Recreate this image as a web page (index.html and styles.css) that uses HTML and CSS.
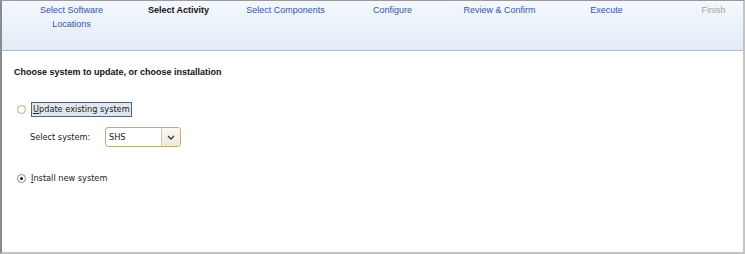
FILE: index.html
```html
<!DOCTYPE html>
<html lang="en">
<head>
    <meta charset="UTF-8">
    <title>Install Wizard</title>
    <link rel="stylesheet" href="styles.css">
</head>
<body>
    <div class="frame">
        <div class="steps">
            <div class="step">Select Software<br>Locations</div>
            <div class="step current">Select Activity</div>
            <div class="step">Select Components</div>
            <div class="step">Configure</div>
            <div class="step">Review &amp; Confirm</div>
            <div class="step">Execute</div>
            <div class="step disabled">Finish</div>
        </div>

        <div class="content">
            <h2 class="title">Choose system to update, or choose installation</h2>

            <label class="option first">
                <span class="radio"></span>
                <span class="focus"><u>U</u>pdate existing system</span>
            </label>

            <div class="select-row">
                <span class="select-label">Select system:</span>
                <div class="combo">
                    <span class="combo-value">SHS</span>
                    <span class="combo-btn">
                        <svg width="8" height="5" viewBox="0 0 8 5"><path d="M1 1 L4 4 L7 1" fill="none" stroke="#333" stroke-width="1.3"/></svg>
                    </span>
                </div>
            </div>

            <label class="option second">
                <span class="radio checked"></span>
                <span class="text"><u>I</u>nstall new system</span>
            </label>
        </div>
    </div>
</body>
</html>
```

FILE: styles.css
```css
body {
    margin: 0;
    background: #fff;
    font-family: 'Liberation Sans', Arial, sans-serif;
}
.frame {
    width: 745px;
    height: 254px;
    box-sizing: border-box;
    border-left: 2px solid #8a8a8a;
    border-right: 2px solid #c4c4c4;
    border-bottom: 2px solid #c4c4c4;
    border-top: 1px solid #9a9a9a;
    overflow: hidden;
}
.steps {
    display: flex;
    height: 49px;
    padding-left: 16px;
    background: linear-gradient(#f4f8fe, #e3ebf5);
    border-bottom: 1px solid #a9bdd5;
}
.step {
    flex: 0 0 107px;
    text-align: center;
    font-size: 9px;
    line-height: 14px;
    padding-top: 2px;
    color: #3355a6;
}
.step.current {
    color: #111;
    font-weight: bold;
}
.step.disabled {
    color: #a0a0a0;
}
.content {
    display: flex;
    flex-direction: column;
    align-items: flex-start;
    padding-left: 12px;
    font-family: 'DejaVu Sans', sans-serif;
    font-size: 8.2px;
    color: #222;
}
.title {
    margin: 15px 0 0;
    font-family: 'Liberation Sans', Arial, sans-serif;
    font-size: 9px;
    font-weight: bold;
    line-height: 12px;
    color: #111;
}
.option {
    display: flex;
    align-items: center;
    gap: 5px;
    padding-left: 3px;
}
.option.first {
    margin-top: 24px;
}
.option.second {
    margin-top: 25px;
}
.radio {
    width: 9px;
    height: 9px;
    box-sizing: border-box;
    border: 1px solid #b9a774;
    border-radius: 50%;
    background: #fff;
    position: relative;
}
.radio.checked {
    border-color: #8a8a8a;
}
.radio.checked::after {
    content: '';
    position: absolute;
    left: 2px;
    top: 2px;
    width: 3px;
    height: 3px;
    border-radius: 50%;
    background: #111;
}
.focus {
    border: 1px solid #56657a;
    background: #dfe6ef;
    padding: 1px 1px;
    line-height: 11px;
}
.text {
    line-height: 13px;
}
.select-row {
    display: flex;
    align-items: center;
    margin-top: 10px;
    padding-left: 16px;
}
.select-label {
    width: 75px;
}
.combo {
    display: flex;
    width: 76px;
    height: 20px;
    box-sizing: border-box;
    border: 1px solid #c2ac7c;
    border-radius: 3px;
    background: #fff;
    overflow: hidden;
}
.combo-value {
    flex: 1;
    padding-left: 3px;
    line-height: 18px;
}
.combo-btn {
    width: 18px;
    display: flex;
    align-items: center;
    justify-content: center;
    border-left: 1px solid #d2c4a4;
    background: linear-gradient(#fbf8f2, #efe8da);
}
```
